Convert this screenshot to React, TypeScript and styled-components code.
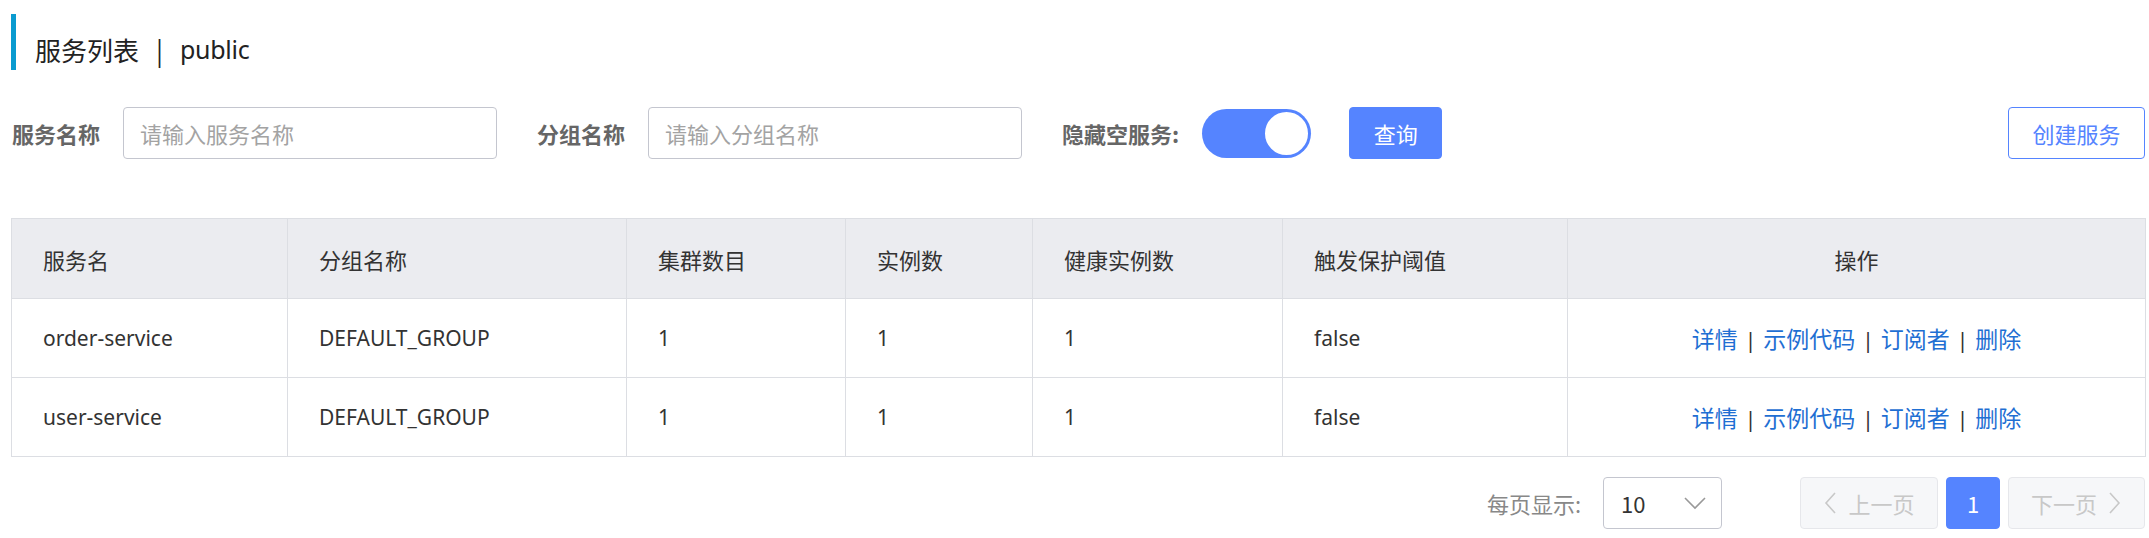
import React from "react";
import styled, { createGlobalStyle } from "styled-components";

const Global = createGlobalStyle`
  html, body { margin: 0; padding: 0; background: #fff; }
  body { font-family: "Noto Sans", "Noto Sans CJK SC", sans-serif; color: #333; }
  * { box-sizing: border-box; }
`;

const Page = styled.div`
  padding: 14px 4px 0 11px;
  display: flex;
  flex-direction: column;
`;

const TitleBar = styled.div`
  height: 56px;
  border-left: 5px solid #0a9bd0;
  padding: 14px 0 0 19px;
  display: flex;
  align-items: center;
  font-size: 26px;
  color: #222;
  font-family: "Noto Sans CJK SC", sans-serif;
`;

const Sep = styled.span`
  margin: 0 17px;
`;

const Latin = styled.span`
  font-family: "Noto Sans", sans-serif;
  font-size: 25px;
  letter-spacing: -0.3px;
`;

const FilterRow = styled.div`
  margin-top: 37px;
  height: 52px;
  display: flex;
  align-items: center;
`;

const FormItem = styled.div<{ $gapAfter?: number }>`
  display: flex;
  align-items: center;
  gap: 23px;
  margin-right: ${(p) => p.$gapAfter ?? 39}px;
`;

const Label = styled.span`
  font-size: 22px;
  font-weight: 700;
  color: #666;
  font-family: "Noto Sans CJK SC", sans-serif;
  padding-left: 1px;
`;

const Input = styled.input`
  width: 374px;
  height: 52px;
  border: 1px solid #c4c6cf;
  border-radius: 4px;
  padding: 0 16px;
  font-size: 22px;
  font-family: "Noto Sans CJK SC", sans-serif;
  color: #333;
  outline: none;
  &::placeholder { color: #a3a3a3; }
`;

const Toggle = styled.div`
  width: 109px;
  height: 49px;
  border-radius: 25px;
  background: #5584ff;
  display: flex;
  align-items: center;
  justify-content: flex-end;
  padding-right: 1px;
`;

const Knob = styled.div`
  width: 47px;
  height: 47px;
  border-radius: 50%;
  background: #fff;
  border: 2px solid #5584ff;
`;

const Button = styled.button<{ $primary?: boolean; $w: number }>`
  width: ${(p) => p.$w}px;
  height: 52px;
  border-radius: 4px;
  font-size: 22px;
  font-family: "Noto Sans CJK SC", sans-serif;
  cursor: pointer;
  border: 1px solid #5584ff;
  background: ${(p) => (p.$primary ? "#5584ff" : "#fff")};
  color: ${(p) => (p.$primary ? "#fff" : "#5584ff")};
  padding: 0;
`;

const Spacer = styled.div`
  flex: 1;
`;

const Table = styled.table`
  margin-top: 59px;
  width: 2134px;
  border-collapse: collapse;
  table-layout: fixed;
  font-size: 21px;
  color: #333;
`;

const Th = styled.th<{ $center?: boolean }>`
  height: 80px;
  background: #ebecf0;
  border: 1px solid #dcdee3;
  font-weight: 400;
  text-align: ${(p) => (p.$center ? "center" : "left")};
  padding: 0 0 0 ${(p) => (p.$center ? 0 : 31)}px;
  font-family: "Noto Sans CJK SC", sans-serif;
  font-size: 22px;
  color: #333;
`;

const Td = styled.td<{ $center?: boolean }>`
  height: 79px;
  border: 1px solid #dcdee3;
  text-align: ${(p) => (p.$center ? "center" : "left")};
  padding: 0 0 0 ${(p) => (p.$center ? 0 : 31)}px;
`;

const Link = styled.a`
  color: #1f6fd3;
  font-family: "Noto Sans CJK SC", sans-serif;
  font-size: 23px;
  cursor: pointer;
`;

const LinkSep = styled.span`
  color: #333;
  margin: 0 7px;
`;

const Pager = styled.div`
  margin-top: 20px;
  display: flex;
  justify-content: flex-end;
  align-items: center;
  height: 52px;
  font-family: "Noto Sans CJK SC", sans-serif;
`;

const PagerLabel = styled.span`
  font-size: 22px;
  color: #888;
  margin-right: 22px;
`;

const Select = styled.div`
  width: 119px;
  height: 52px;
  border: 1px solid #c4c6cf;
  border-radius: 4px;
  display: flex;
  align-items: center;
  justify-content: space-between;
  padding: 0 14px 0 17px;
  font-size: 22px;
  color: #333;
  margin-right: 70px;
`;

const PageBtn = styled.div<{ $active?: boolean; $w: number }>`
  width: ${(p) => p.$w}px;
  height: 52px;
  border-radius: 4px;
  border: 1px solid ${(p) => (p.$active ? "#5584ff" : "#e6e7eb")};
  background: ${(p) => (p.$active ? "#5584ff" : "#f6f7f9")};
  color: ${(p) => (p.$active ? "#fff" : "#c8c8c8")};
  display: flex;
  align-items: center;
  justify-content: center;
  gap: 10px;
  font-size: 22px;
  margin-left: 8px;
`;

const Chevron = ({ dir, color = "#c8c8c8" }: { dir: "left" | "right" | "down"; color?: string }) => {
  if (dir === "down") {
    return (
      <svg width="24" height="14" viewBox="0 0 24 14" fill="none" stroke={color} strokeWidth="1.6">
        <path d="M2 2 L12 12 L22 2" />
      </svg>
    );
  }
  const d = dir === "left" ? "M12 2 L3 12 L12 22" : "M3 2 L12 12 L3 22";
  return (
    <svg width="15" height="24" viewBox="0 0 15 24" fill="none" stroke={color} strokeWidth="1.6">
      <path d={d} />
    </svg>
  );
};

const rows = [{ name: "order-service" }, { name: "user-service" }];

export default function App() {
  return (
    <>
      <Global />
      <Page>
        <TitleBar>
          服务列表<Sep>|</Sep>
          <Latin>public</Latin>
        </TitleBar>
        <FilterRow>
          <FormItem>
            <Label>服务名称</Label>
            <Input placeholder="请输入服务名称" />
          </FormItem>
          <FormItem>
            <Label>分组名称</Label>
            <Input placeholder="请输入分组名称" />
          </FormItem>
          <FormItem $gapAfter={38}>
            <Label>隐藏空服务:</Label>
            <Toggle>
              <Knob />
            </Toggle>
          </FormItem>
          <Button $primary $w={93}>查询</Button>
          <Spacer />
          <Button $w={137}>创建服务</Button>
        </FilterRow>
        <Table>
          <colgroup>
            <col style={{ width: 276 }} />
            <col style={{ width: 339 }} />
            <col style={{ width: 219 }} />
            <col style={{ width: 187 }} />
            <col style={{ width: 250 }} />
            <col style={{ width: 285 }} />
            <col style={{ width: 578 }} />
          </colgroup>
          <thead>
            <tr>
              <Th>服务名</Th>
              <Th>分组名称</Th>
              <Th>集群数目</Th>
              <Th>实例数</Th>
              <Th>健康实例数</Th>
              <Th>触发保护阈值</Th>
              <Th $center>操作</Th>
            </tr>
          </thead>
          <tbody>
            {rows.map((r) => (
              <tr key={r.name}>
                <Td>{r.name}</Td>
                <Td>DEFAULT_GROUP</Td>
                <Td>1</Td>
                <Td>1</Td>
                <Td>1</Td>
                <Td>false</Td>
                <Td $center>
                  <Link>详情</Link>
                  <LinkSep>|</LinkSep>
                  <Link>示例代码</Link>
                  <LinkSep>|</LinkSep>
                  <Link>订阅者</Link>
                  <LinkSep>|</LinkSep>
                  <Link>删除</Link>
                </Td>
              </tr>
            ))}
          </tbody>
        </Table>
        <Pager>
          <PagerLabel>每页显示:</PagerLabel>
          <Select>
            <span>10</span>
            <Chevron dir="down" color="#999" />
          </Select>
          <PageBtn $w={138}>
            <Chevron dir="left" />
            <span>上一页</span>
          </PageBtn>
          <PageBtn $w={54} $active>1</PageBtn>
          <PageBtn $w={137}>
            <span>下一页</span>
            <Chevron dir="right" />
          </PageBtn>
        </Pager>
      </Page>
    </>
  );
}
